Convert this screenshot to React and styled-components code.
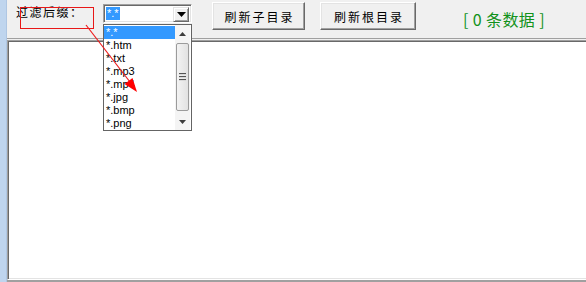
import React from "react";
import styled, { createGlobalStyle } from "styled-components";

const EXTENSIONS = ["*.*", "*.htm", "*.txt", "*.mp3", "*.mp4", "*.jpg", "*.bmp", "*.png"];

const GlobalStyle = createGlobalStyle`
  html, body {
    margin: 0;
    padding: 0;
    background: #f0f0f0;
  }
  body {
    font-family: "Noto Sans CJK SC", "Liberation Sans", sans-serif;
  }
`;

const App = () => {
  return (
    <>
      <GlobalStyle />
      <Window>
        <SideStrip />
        <Main>
          <Toolbar>
            <FilterLabel>过滤后缀：</FilterLabel>
            <Combo>
              <ComboValue>
                <Selected>*.*</Selected>
              </ComboValue>
              <DropButton>
                <svg width="9" height="5" viewBox="0 0 9 5">
                  <polygon points="0,0 9,0 4.5,5" fill="#000" />
                </svg>
              </DropButton>
              <DropList>
                <Items>
                  {EXTENSIONS.map((ext, i) => (
                    <Item key={ext} active={i === 0}>
                      {ext}
                    </Item>
                  ))}
                </Items>
                <ScrollBar>
                  <ScrollArrow>
                    <svg width="7" height="4" viewBox="0 0 7 4">
                      <polygon points="0,4 7,4 3.5,0" fill="#3c3c3c" />
                    </svg>
                  </ScrollArrow>
                  <Thumb>
                    <Grip />
                    <Grip />
                    <Grip />
                  </Thumb>
                  <ScrollArrow>
                    <svg width="7" height="4" viewBox="0 0 7 4">
                      <polygon points="0,0 7,0 3.5,4" fill="#3c3c3c" />
                    </svg>
                  </ScrollArrow>
                </ScrollBar>
              </DropList>
            </Combo>
            <Button gap={20} width={93}>刷新子目录</Button>
            <Button gap={15} width={96}>刷新根目录</Button>
            <Count>[ 0 条数据 ]</Count>
          </Toolbar>
          <PanelFrame>
            <ListBox />
          </PanelFrame>
          <StatusEdge />
        </Main>
        <Annotation>
          <MarkBox />
          <svg width="586" height="282" viewBox="0 0 586 282">
            <line x1="86" y1="25" x2="130" y2="82" stroke="#ee1c1c" strokeWidth="1.2" />
            <polygon points="137,92 124.5,83.9 132.5,77.9" fill="#ff0000" />
          </svg>
        </Annotation>
      </Window>
    </>
  );
};

const Window = styled.div`
  position: relative;
  display: flex;
  width: 586px;
  height: 282px;
  overflow: hidden;
  background: #f0f0f0;
`;

const SideStrip = styled.div`
  width: 6px;
  flex: none;
  background: #bfd5ee;
  border-right: 1px solid #aec6e3;
`;

const Main = styled.div`
  flex: 1;
  display: flex;
  flex-direction: column;
  min-width: 0;
`;

const Toolbar = styled.div`
  height: 38px;
  flex: none;
  display: flex;
  align-items: flex-start;
  position: relative;
  z-index: 2;
`;

const FilterLabel = styled.div`
  margin: 4px 0 0 9px;
  width: 87px;
  font-size: 12px;
  line-height: 15px;
  letter-spacing: 1.5px;
  color: #000;
`;

const Combo = styled.div`
  position: relative;
  margin-top: 4px;
  width: 89px;
  height: 19px;
  box-sizing: border-box;
  display: flex;
  background: #fff;
  border: 1px solid;
  border-color: #a0a0a0 #fff #fff #a0a0a0;
  box-shadow: inset 1px 1px #696969, inset -1px -1px #e3e3e3;
  padding: 2px;
`;

const ComboValue = styled.div`
  flex: 1;
  display: flex;
  align-items: center;
`;

const Selected = styled.span`
  background: #3399ff;
  color: #fff;
  font-family: "Liberation Sans", sans-serif;
  font-size: 11px;
  line-height: 13px;
  padding: 0 1px;
`;

const DropButton = styled.div`
  width: 16px;
  height: 15px;
  box-sizing: border-box;
  display: flex;
  align-items: center;
  justify-content: center;
  background: #f0f0f0;
  border: 1px solid;
  border-color: #e3e3e3 #696969 #696969 #e3e3e3;
  box-shadow: inset 1px 1px #fff, inset -1px -1px #a0a0a0;
`;

const DropList = styled.div`
  position: absolute;
  left: -1px;
  top: 19px;
  width: 89px;
  height: 107px;
  box-sizing: border-box;
  border: 1px solid #646464;
  background: #fff;
  display: flex;
`;

const Items = styled.div`
  flex: 1;
  padding-top: 1px;
`;

const Item = styled.div`
  height: 13px;
  line-height: 13px;
  font-family: "Liberation Sans", sans-serif;
  font-size: 11px;
  padding-left: 2px;
  color: ${({ active }) => (active ? "#fff" : "#000")};
  background: ${({ active }) => (active ? "#3399ff" : "transparent")};
`;

const ScrollBar = styled.div`
  width: 15px;
  margin-right: 1px;
  display: flex;
  flex-direction: column;
  background: #f4f4f4;
`;

const ScrollArrow = styled.div`
  height: 17px;
  display: flex;
  align-items: center;
  justify-content: center;
`;

const Thumb = styled.div`
  flex: 1;
  margin: 1px 1px 2px 1px;
  box-sizing: border-box;
  border: 1px solid #9b9b9b;
  border-radius: 2px;
  background: linear-gradient(to right, #f3f3f3, #e2e2e2);
  display: flex;
  flex-direction: column;
  align-items: center;
  justify-content: center;
  gap: 1px;
`;

const Grip = styled.div`
  width: 7px;
  height: 1px;
  background: #555;
  border-bottom: 1px solid #d9d9d9;
`;

const Button = styled.div`
  margin: 2px 0 0 ${({ gap }) => gap}px;
  width: ${({ width }) => width}px;
  height: 28px;
  box-sizing: border-box;
  display: flex;
  align-items: center;
  justify-content: center;
  background: #f0f0f0;
  border: 1px solid;
  border-color: #fff #696969 #696969 #fff;
  box-shadow: inset -1px -1px #a0a0a0, inset 1px 1px #e3e3e3;
  font-size: 12px;
  letter-spacing: 2px;
  padding-left: 2px;
  color: #000;
`;

const Count = styled.div`
  margin: 9px 0 0 47px;
  font-size: 16px;
  line-height: 20px;
  letter-spacing: 0.4px;
  color: #12921a;
  white-space: pre;
`;

const PanelFrame = styled.div`
  flex: 1;
  display: flex;
  border-top: 1px solid #a0a0a0;
  padding-top: 1px;
  min-height: 0;
`;

const ListBox = styled.div`
  flex: 1;
  background: #fff;
  border-left: 1px solid #a0a0a0;
  border-top: 1px solid #a0a0a0;
  border-bottom: 1px solid #fff;
  box-shadow: inset 1px 1px #696969, inset 0 -1px #e3e3e3;
`;

const StatusEdge = styled.div`
  height: 2px;
  flex: none;
  background: #a0a0a0;
`;

const Annotation = styled.div`
  position: absolute;
  inset: 0;
  pointer-events: none;
  z-index: 5;

  svg {
    position: absolute;
    left: 0;
    top: 0;
  }
`;

const MarkBox = styled.div`
  position: absolute;
  left: 20px;
  top: 7px;
  width: 72px;
  height: 20px;
  border: 1px solid #e81818;
`;

export default App;
